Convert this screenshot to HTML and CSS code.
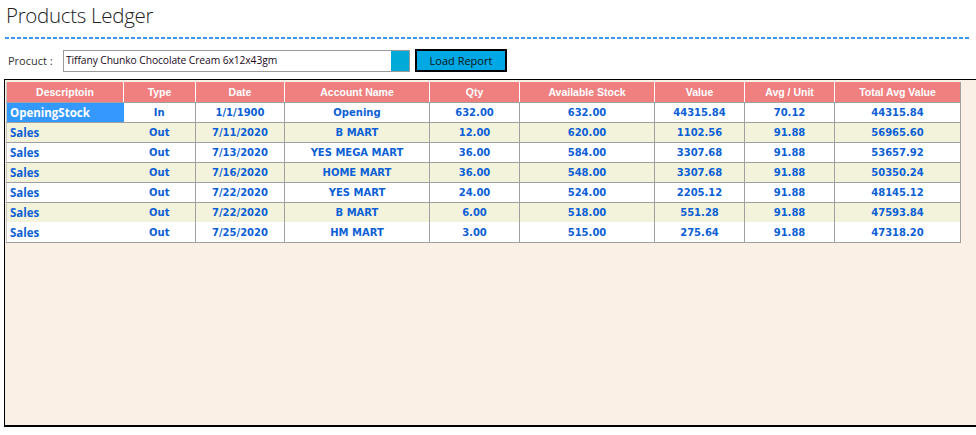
FILE: index.html
```html
<!DOCTYPE html>
<html>
<head>
<meta charset="utf-8">
<link rel="stylesheet" href="styles.css">
</head>
<body>
<div class="page">
  <h1 class="title">Products Ledger</h1>
  <div class="rule"></div>
  <div class="filter">
    <span class="label">Procuct :</span>
    <div class="combo">
      <span class="combo-text">Tiffany Chunko Chocolate Cream 6x12x43gm</span>
      <span class="combo-btn"></span>
    </div>
    <button class="load">Load Report</button>
  </div>
  <div class="panel">
    <table class="grid">
      <colgroup>
        <col class="c1"><col class="c2"><col class="c3"><col class="c4"><col class="c5"><col class="c6"><col class="c7"><col class="c8"><col class="c9">
      </colgroup>
      <thead>
        <tr>
          <th>Descriptoin</th><th>Type</th><th>Date</th><th>Account Name</th><th>Qty</th><th>Available Stock</th><th>Value</th><th>Avg / Unit</th><th>Total Avg Value</th>
        </tr>
      </thead>
      <tbody>
        <tr>
          <td class="desc sel">OpeningStock</td><td>In</td><td>1/1/1900</td><td>Opening</td><td>632.00</td><td>632.00</td><td>44315.84</td><td>70.12</td><td>44315.84</td>
        </tr>
        <tr class="alt">
          <td class="desc">Sales</td><td>Out</td><td>7/11/2020</td><td>B MART</td><td>12.00</td><td>620.00</td><td>1102.56</td><td>91.88</td><td>56965.60</td>
        </tr>
        <tr>
          <td class="desc">Sales</td><td>Out</td><td>7/13/2020</td><td>YES MEGA MART</td><td>36.00</td><td>584.00</td><td>3307.68</td><td>91.88</td><td>53657.92</td>
        </tr>
        <tr class="alt">
          <td class="desc">Sales</td><td>Out</td><td>7/16/2020</td><td>HOME MART</td><td>36.00</td><td>548.00</td><td>3307.68</td><td>91.88</td><td>50350.24</td>
        </tr>
        <tr>
          <td class="desc">Sales</td><td>Out</td><td>7/22/2020</td><td>YES MART</td><td>24.00</td><td>524.00</td><td>2205.12</td><td>91.88</td><td>48145.12</td>
        </tr>
        <tr class="alt nob">
          <td class="desc">Sales</td><td>Out</td><td>7/22/2020</td><td>B MART</td><td>6.00</td><td>518.00</td><td>551.28</td><td>91.88</td><td>47593.84</td>
        </tr>
        <tr>
          <td class="desc">Sales</td><td>Out</td><td>7/25/2020</td><td>HM MART</td><td>3.00</td><td>515.00</td><td>275.64</td><td>91.88</td><td>47318.20</td>
        </tr>
      </tbody>
    </table>
  </div>
</div>
</body>
</html>
```

FILE: styles.css
```css
html, body {
  margin: 0;
  padding: 0;
  background: #ffffff;
  overflow: hidden;
}

.page {
  width: 976px;
  height: 435px;
  position: relative;
  overflow: hidden;
  font-family: "Liberation Sans", Arial, sans-serif;
}

.title {
  margin: 0;
  padding: 2px 0 0 6px;
  height: 30px;
  font-family: "Open Sans", "Liberation Sans", sans-serif;
  font-weight: 300;
  font-size: 20.5px;
  letter-spacing: -0.3px;
  line-height: 26px;
  color: #222222;
}

.rule {
  margin: 5px 6px 0 5px;
  height: 2px;
  background: repeating-linear-gradient(to right, #3c97f0 0, #3c97f0 4px, transparent 4px, transparent 6px);
}

.filter {
  display: flex;
  align-items: center;
  height: 23px;
  margin-top: 10px;
  padding-left: 8px;
}

.label {
  width: 55px;
  font-family: "Open Sans", "Liberation Sans", sans-serif;
  font-size: 11px;
  color: #333333;
}

.combo {
  box-sizing: border-box;
  display: flex;
  width: 347px;
  height: 22px;
  border: 1px solid #9a9a9a;
  background: #ffffff;
}

.combo-text {
  flex: 1;
  padding-left: 2px;
  font-family: "Open Sans", "Liberation Sans", sans-serif;
  font-size: 10.3px;
  letter-spacing: -0.1px;
  line-height: 19px;
  color: #1a0a1a;
  white-space: nowrap;
}

.combo-btn {
  width: 18px;
  background: #00aad8;
}

.load {
  box-sizing: border-box;
  margin-left: 5px;
  width: 92px;
  height: 23px;
  border: 2px solid #000000;
  background: #00a8e4;
  font-family: "Open Sans", "Liberation Sans", sans-serif;
  font-size: 11px;
  color: #111111;
  padding: 0;
}

.panel {
  box-sizing: border-box;
  margin: 7px 0 0 4px;
  width: 990px;
  height: 348px;
  border-top: 1px solid #000000;
  border-left: 1px solid #000000;
  border-bottom: 2px solid #000000;
  background: #faf0e6;
  padding: 2px 0 0 1px;
}

.grid {
  table-layout: fixed;
  border-collapse: collapse;
  width: 954px;
  background: #ffffff;
}

.c1 { width: 117px; }
.c2 { width: 72px; }
.c3 { width: 89px; }
.c4 { width: 145px; }
.c5 { width: 90px; }
.c6 { width: 135px; }
.c7 { width: 90px; }
.c8 { width: 90px; }
.c9 { width: 126px; }

.grid th {
  height: 20px;
  padding: 0;
  background: #f08080;
  color: #ffffff;
  font-family: "Liberation Sans", Arial, sans-serif;
  font-weight: bold;
  font-size: 10.5px;
  text-align: center;
  border-left: 1px solid #ffffff;
  border-bottom: 1px solid #a0a0a0;
}

.grid th:first-child {
  border-left: 1px solid #c8c8c8;
}

.grid th:last-child {
  border-right: 1px solid #a0a0a0;
}

.grid td {
  height: 19px;
  padding: 0;
  text-align: center;
  font-family: "DejaVu Sans", Verdana, sans-serif;
  font-weight: bold;
  font-size: 10px;
  color: #0c5fd4;
  border: 1px solid #a0a0a0;
  white-space: nowrap;
  overflow: hidden;
}

.grid td.desc {
  text-align: left;
  padding-left: 3px;
  font-family: "Open Sans", "Liberation Sans", sans-serif;
  font-weight: 700;
  font-size: 11.5px;
  border-right: none;
  border-left: 1px solid #c8c8c8;
}

.grid td:nth-child(2) {
  border-left: none;
}

.grid td.sel {
  background: #3399ff;
  color: #ffffff;
}

.grid tr.alt td {
  background: #f3f3dc;
}

.grid tr.nob td {
  border-bottom-color: transparent;
}
```
